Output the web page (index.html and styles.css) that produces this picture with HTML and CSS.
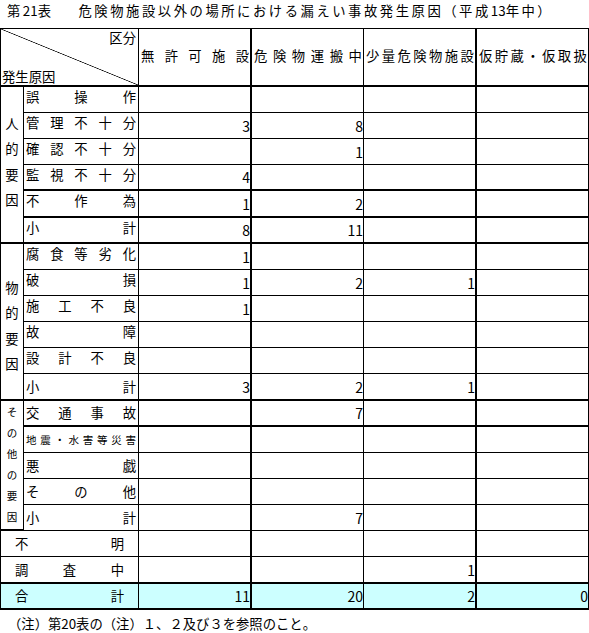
FILE: index.html
```html
<!DOCTYPE html>
<html lang="ja">
<head>
<meta charset="utf-8">
<title>第21表</title>
<link rel="stylesheet" href="styles.css">
</head>
<body>
<h1 class="title"><span class="lead">第<span class="num">21</span>表</span>危険物施設以外の場所における漏えい事故発生原因（平成<span class="num">13</span>年中）</h1>
<table class="tbl">
<colgroup>
<col class="c-grp"><col class="c-lbl"><col class="c-v1"><col class="c-v2"><col class="c-v3"><col class="c-v4">
</colgroup>
<thead>
<tr class="hdr">
<th colspan="2" class="corner"><div class="corner-in"><span class="k-top">区分</span><span class="k-bot">発生原因</span></div></th>
<th class="h v1"><div class="dist"><span>無</span><span>許</span><span>可</span><span>施</span><span>設</span></div></th>
<th class="h"><div class="dist"><span>危</span><span>険</span><span>物</span><span>運</span><span>搬</span><span>中</span></div></th>
<th class="h v3"><div class="dist"><span>少</span><span>量</span><span>危</span><span>険</span><span>物</span><span>施</span><span>設</span></div></th>
<th class="h"><div class="dist"><span>仮</span><span>貯</span><span>蔵</span><span>・</span><span>仮</span><span>取</span><span>扱</span></div></th>
</tr>
</thead>
<tbody>
<tr class="up">
<td rowspan="6" class="grp grp-human tbb"><div class="vert"><span>人</span><span>的</span><span>要</span><span>因</span></div></td>
<td class="lbl"><div class="dist"><span>誤</span><span>操</span><span>作</span></div></td>
<td class="n v1"></td><td class="n"></td><td class="n v3"></td><td class="n"></td>
</tr>
<tr class="up">
<td class="lbl"><div class="dist"><span>管</span><span>理</span><span>不</span><span>十</span><span>分</span></div></td>
<td class="n v1">3</td><td class="n">8</td><td class="n v3"></td><td class="n"></td>
</tr>
<tr class="up">
<td class="lbl"><div class="dist"><span>確</span><span>認</span><span>不</span><span>十</span><span>分</span></div></td>
<td class="n v1"></td><td class="n">1</td><td class="n v3"></td><td class="n"></td>
</tr>
<tr class="up tb">
<td class="lbl"><div class="dist"><span>監</span><span>視</span><span>不</span><span>十</span><span>分</span></div></td>
<td class="n v1">4</td><td class="n"></td><td class="n v3"></td><td class="n"></td>
</tr>
<tr class="up tb h27">
<td class="lbl"><div class="dist"><span>不</span><span>作</span><span>為</span></div></td>
<td class="n v1">1</td><td class="n">2</td><td class="n v3"></td><td class="n"></td>
</tr>
<tr class="up tb">
<td class="lbl"><div class="dist"><span>小</span><span>計</span></div></td>
<td class="n v1">8</td><td class="n">11</td><td class="n v3"></td><td class="n"></td>
</tr>
<tr class="up">
<td rowspan="6" class="grp grp-mono tbb"><div class="vert"><span>物</span><span>的</span><span>要</span><span>因</span></div></td>
<td class="lbl"><div class="dist"><span>腐</span><span>食</span><span>等</span><span>劣</span><span>化</span></div></td>
<td class="n v1">1</td><td class="n"></td><td class="n v3"></td><td class="n"></td>
</tr>
<tr class="up">
<td class="lbl"><div class="dist"><span>破</span><span>損</span></div></td>
<td class="n v1">1</td><td class="n">2</td><td class="n v3">1</td><td class="n"></td>
</tr>
<tr class="up">
<td class="lbl"><div class="dist"><span>施</span><span>工</span><span>不</span><span>良</span></div></td>
<td class="n v1">1</td><td class="n"></td><td class="n v3"></td><td class="n"></td>
</tr>
<tr class="up">
<td class="lbl"><div class="dist"><span>故</span><span>障</span></div></td>
<td class="n v1"></td><td class="n"></td><td class="n v3"></td><td class="n"></td>
</tr>
<tr class="up">
<td class="lbl"><div class="dist"><span>設</span><span>計</span><span>不</span><span>良</span></div></td>
<td class="n v1"></td><td class="n"></td><td class="n v3"></td><td class="n"></td>
</tr>
<tr class="tb h27">
<td class="lbl"><div class="dist"><span>小</span><span>計</span></div></td>
<td class="n v1">3</td><td class="n">2</td><td class="n v3">1</td><td class="n"></td>
</tr>
<tr class="tb">
<td rowspan="5" class="grp grp-other"><div class="vert small"><span>そ</span><span>の</span><span>他</span><span>の</span><span>要</span><span>因</span></div></td>
<td class="lbl"><div class="dist"><span>交</span><span>通</span><span>事</span><span>故</span></div></td>
<td class="n v1"></td><td class="n">7</td><td class="n v3"></td><td class="n"></td>
</tr>
<tr>
<td class="lbl"><div class="dist small"><span>地</span><span>震</span><span>・</span><span>水</span><span>害</span><span>等</span><span>災</span><span>害</span></div></td>
<td class="n v1"></td><td class="n"></td><td class="n v3"></td><td class="n"></td>
</tr>
<tr>
<td class="lbl"><div class="dist"><span>悪</span><span>戯</span></div></td>
<td class="n v1"></td><td class="n"></td><td class="n v3"></td><td class="n"></td>
</tr>
<tr>
<td class="lbl"><div class="dist"><span>そ</span><span>の</span><span>他</span></div></td>
<td class="n v1"></td><td class="n"></td><td class="n v3"></td><td class="n"></td>
</tr>
<tr>
<td class="lbl"><div class="dist"><span>小</span><span>計</span></div></td>
<td class="n v1"></td><td class="n">7</td><td class="n v3"></td><td class="n"></td>
</tr>
<tr>
<td colspan="2" class="wide"><div class="dist"><span>不</span><span>明</span></div></td>
<td class="n v1"></td><td class="n"></td><td class="n v3"></td><td class="n"></td>
</tr>
<tr class="tb h27">
<td colspan="2" class="wide"><div class="dist"><span>調</span><span>査</span><span>中</span></div></td>
<td class="n v1"></td><td class="n"></td><td class="n v3">1</td><td class="n"></td>
</tr>
<tr class="tb total">
<td colspan="2" class="wide"><div class="dist"><span>合</span><span>計</span></div></td>
<td class="n v1">11</td><td class="n">20</td><td class="n v3">2</td><td class="n">0</td>
</tr>
</tbody>
</table>
<p class="note">（注）第<span class="num">20</span>表の（注）１、２及び３を参照のこと。</p>
</body>
</html>
```

FILE: styles.css
```css
* { box-sizing: border-box; }

html, body {
  margin: 0;
  padding: 0;
  background: #ffffff;
}

body {
  font-family: "Noto Sans CJK JP", sans-serif;
  font-size: 13.33px;
  color: #000000;
}

.title {
  margin: 0 0 6px 0;
  padding-left: 7px;
  font-size: 13.33px;
  font-weight: normal;
  line-height: 22px;
  letter-spacing: 2.53px;
  white-space: nowrap;
}

.title .num { letter-spacing: 0; }

.title .lead { margin-right: 25px; }

.tbl {
  border-collapse: separate;
  border-spacing: 0;
  table-layout: fixed;
  width: 589px;
  border-top: 1px solid #000;
  border-left: 1px solid #000;
}

.c-grp { width: 23px; }
.c-lbl { width: 115px; }
.c-v1 { width: 113px; }
.c-v2 { width: 112px; }
.c-v3 { width: 113px; }
.c-v4 { width: 112px; }

.tbl th,
.tbl td {
  border-right: 1px solid #000;
  border-bottom: 1px solid #000;
  padding: 0;
  font-weight: normal;
  vertical-align: middle;
  line-height: 16px;
  white-space: nowrap;
  overflow: hidden;
}

.tbl tr { height: 26px; }
.tbl tr.h27 { height: 27px; }
.tbl tr.hdr { height: 58px; }

.tbl .v1,
.tbl .v3 { border-right-width: 2px; }

.tbl tr.hdr > th { border-bottom-width: 2px; }
.tbl tr.tb > td { border-bottom-width: 2px; }
.tbl td.tbb { border-bottom-width: 2px; }

.corner {
  vertical-align: top;
  background: linear-gradient(to bottom left, transparent calc(50% - 0.7px), #000 50%, transparent calc(50% + 0.7px));
}

.corner-in {
  height: 56px;
  display: flex;
  flex-direction: column;
  justify-content: space-between;
  text-align: left;
}

.k-top {
  align-self: flex-end;
  padding: 2px 2px 0 0;
  line-height: 14px;
}

.k-bot {
  padding: 0 0 1px 1px;
  line-height: 14px;
}

.dist {
  display: flex;
  justify-content: space-between;
  padding: 0 2px;
}

.h .dist { padding: 0 1px 2px 2px; }

.wide .dist { padding: 0 14px 0 14px; }

.dist.small {
  font-size: 10.5px;
  padding: 0 2px 0 2px;
}

.tbl tr.up .lbl .dist { padding-bottom: 5px; }

.grp { vertical-align: middle; }

.vert {
  display: flex;
  flex-direction: column;
  align-items: center;
  line-height: 25.5px;
}

.grp-human .vert { padding-bottom: 6px; }

.grp-mono .vert { padding-top: 8px; }

.grp-other { vertical-align: top; }

.vert.small {
  font-size: 10.5px;
  line-height: 21px;
  margin-top: -2px;
}

.n {
  text-align: right;
  padding-right: 2px;
  font-size: 14px;
}

.total > td { background: #ccffff; }

.note {
  margin: 5px 0 0 0;
  padding-left: 8px;
  font-size: 13.33px;
  line-height: 18px;
  white-space: nowrap;
}
```
